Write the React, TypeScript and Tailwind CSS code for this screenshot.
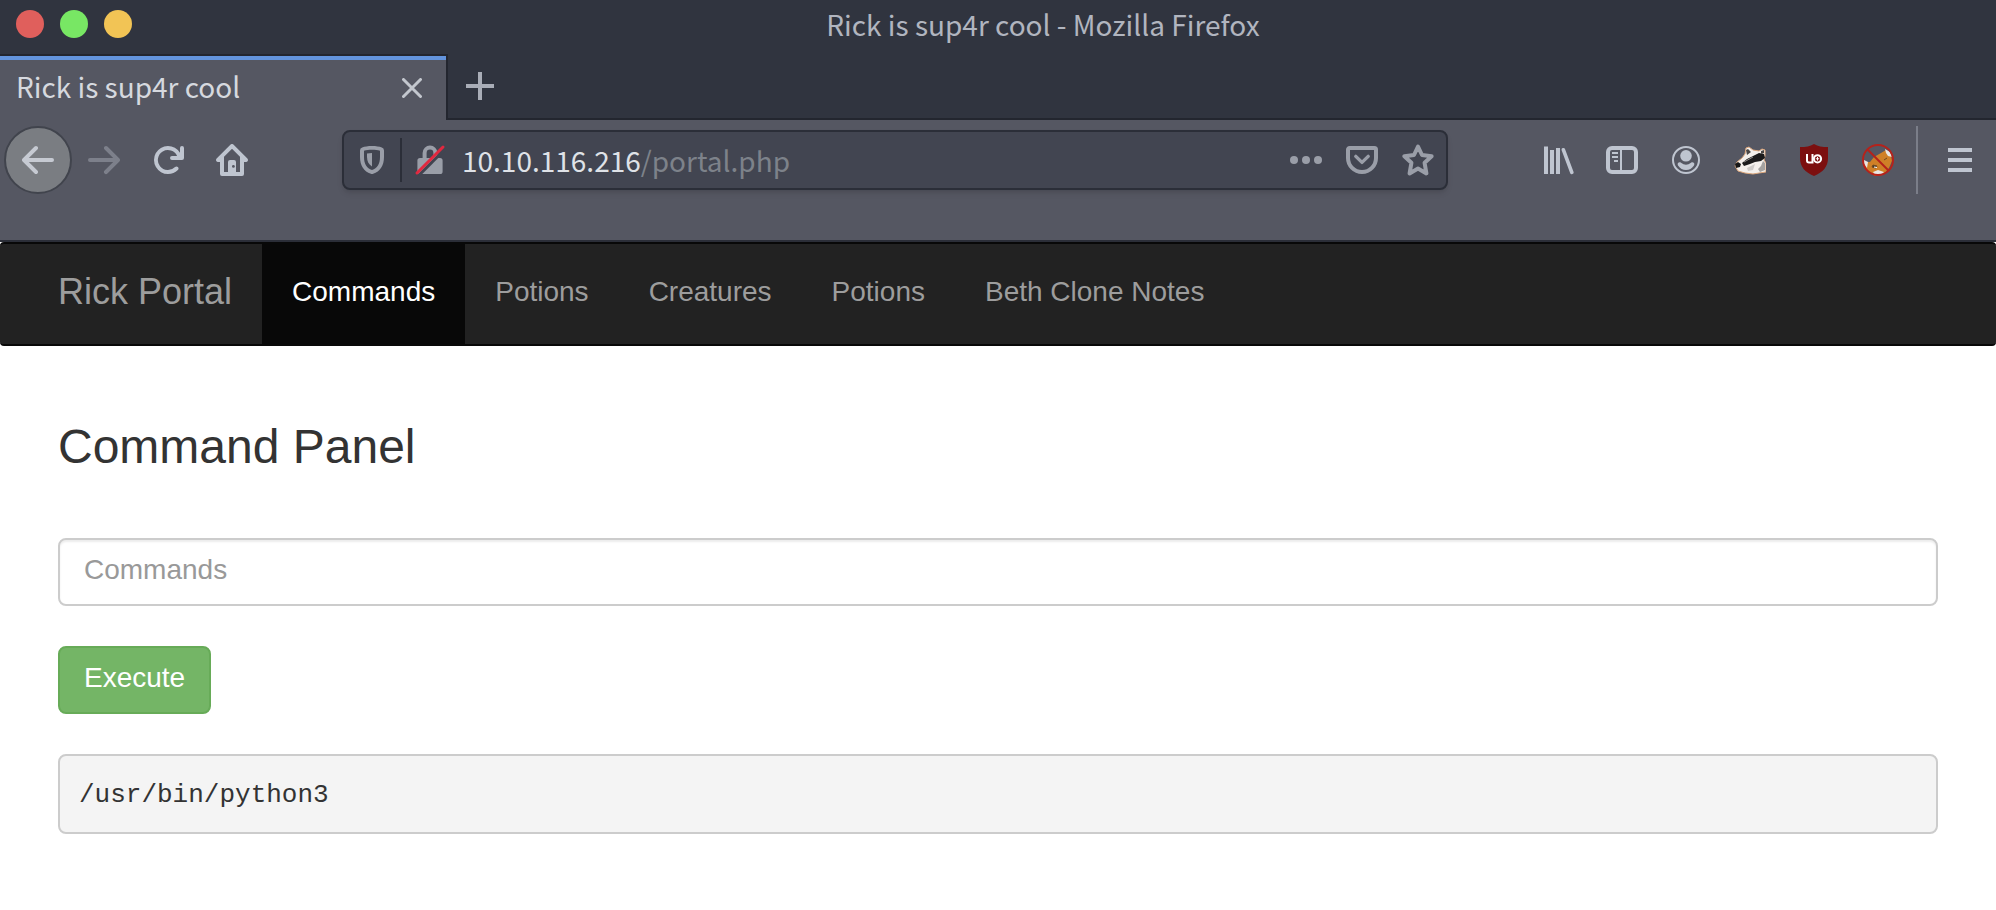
import React from "react";

const photon = "size-8 shrink-0 fill-current";

function BackIcon() {
  return (
    <svg viewBox="0 0 16 16" className={photon} aria-hidden="true">
      <path d="M15 7H3.414l4.293-4.293a1 1 0 0 0-1.414-1.414l-6 6a1 1 0 0 0 0 1.414l6 6a1 1 0 0 0 1.414-1.414L3.414 9H15a1 1 0 0 0 0-2z" />
    </svg>
  );
}

function ForwardIcon() {
  return (
    <svg viewBox="0 0 16 16" className={photon} aria-hidden="true">
      <path d="M15.707 7.293l-6-6a1 1 0 0 0-1.414 1.414L12.586 7H1a1 1 0 0 0 0 2h11.586l-4.293 4.293a1 1 0 1 0 1.414 1.414l6-6a1 1 0 0 0 0-1.414z" />
    </svg>
  );
}

function ReloadIcon() {
  return (
    <svg viewBox="0 0 16 16" className={photon} aria-hidden="true">
      <path d="M15 1a1 1 0 0 0-1 1v2.418A6.995 6.995 0 1 0 8 15a6.954 6.954 0 0 0 4.95-2.05 1 1 0 0 0-1.414-1.414A5.019 5.019 0 1 1 12.549 6H10a1 1 0 0 0 0 2h5a1 1 0 0 0 1-1V2a1 1 0 0 0-1-1z" />
    </svg>
  );
}

function HomeIcon() {
  return (
    <svg viewBox="0 0 16 16" className={photon} aria-hidden="true">
      <path
        fillRule="evenodd"
        d="M8.7.3a1 1 0 0 0-1.4 0l-7 7A1 1 0 0 0 1 9h1v6a1 1 0 0 0 1 1h10a1 1 0 0 0 1-1V9h1a1 1 0 0 0 .7-1.7zM12 14h-2V9a1 1 0 0 0-1-1H7a1 1 0 0 0-1 1v5H4V6.4l4-4 4 4z"
      />
      <circle cx="8.7" cy="11.2" r="0.7" className="fill-[#555762]" />
    </svg>
  );
}

function ShieldIcon() {
  return (
    <svg viewBox="0 0 16 16" className={photon} aria-hidden="true">
      <path
        fillRule="evenodd"
        d="M8 1C6 1 4.300 1.300 3.100 1.700A1.600 1.600 0 0 0 2 3.200v3.300c0 4.300 2 7.400 5.400 8.400a2 2 0 0 0 1.200 0C12 13.900 14 10.800 14 6.500V3.200a1.600 1.600 0 0 0-1.100-1.500C11.700 1.300 10 1 8 1zm0 1.900c1.500 0 2.900.2 4 .5v3.100c0 3.400-1.400 5.700-4 6.500-2.600-.8-4-3.100-4-6.500V3.400c1.100-.3 2.500-.5 4-.5z"
      />
      <path d="M8 4.500c-.9 0-1.700.1-2.500.3v1.700c0 2.200.9 3.800 2.500 4.700z" />
    </svg>
  );
}

function BrokenLockIcon() {
  return (
    <svg viewBox="0 0 16 16" className={photon} aria-hidden="true">
      <path
        fillRule="evenodd"
        d="M4.300 7V4.500a3.700 3.700 0 0 1 7.400 0V7h1.300a1.300 1.300 0 0 1 1.300 1.300v5.400a1.300 1.300 0 0 1-1.300 1.300H3a1.300 1.300 0 0 1-1.300-1.300V8.300A1.300 1.300 0 0 1 3 7zm2 0h3.400V4.500a1.700 1.700 0 0 0-3.400 0z"
      />
      <path d="M2.300 15.800L15.800 2.300" className="stroke-[#424551] stroke-[1.500]" />
      <path d="M1.500 14.500L14.500 1.500" strokeLinecap="round" className="stroke-[#e2283f] stroke-[1.500]" />
    </svg>
  );
}

function DotsIcon() {
  return (
    <svg viewBox="0 0 16 16" className={photon} aria-hidden="true">
      <circle cx="2" cy="8" r="2" />
      <circle cx="8" cy="8" r="2" />
      <circle cx="14" cy="8" r="2" />
    </svg>
  );
}

function PocketIcon() {
  return (
    <svg viewBox="0 0 16 16" className="size-8 shrink-0 fill-none stroke-current stroke-2" aria-hidden="true">
      <path d="M1.800 2h12.400a.8.800 0 0 1 .8.800V7a7 7 0 0 1-14 0V2.800a.8.800 0 0 1 .8-.8z" />
      <path d="M4.900 6.200L8 9.200l3.100-3" strokeLinecap="round" strokeLinejoin="round" className="stroke-[1.700]" />
    </svg>
  );
}

function StarIcon() {
  return (
    <svg viewBox="0 0 16 16" className="size-8 shrink-0 fill-none stroke-current stroke-2" aria-hidden="true">
      <path
        strokeLinejoin="round"
        d="M8 1.300l2 4.200 4.800.6-3.500 3.300.9 5.300L8 12.300l-4.200 2.400.9-5.300L1.200 6.100 6 5.500z"
      />
    </svg>
  );
}

function LibraryIcon() {
  return (
    <svg viewBox="0 0 16 16" className={photon} aria-hidden="true">
      <path d="M1 1.200h2V15H1zM4 3h2v12H4zM7 2h2v13H7z" />
      <path d="M10.700 2.900L14.900 14.200" strokeLinecap="round" className="stroke-current stroke-[1.800]" />
    </svg>
  );
}

function SidebarIcon() {
  return (
    <svg viewBox="0 0 16 16" className={photon} aria-hidden="true">
      <path
        fillRule="evenodd"
        d="M3 1h10a3 3 0 0 1 3 3v8a3 3 0 0 1-3 3H3a3 3 0 0 1-3-3V4a3 3 0 0 1 3-3zm0 2a1 1 0 0 0-1 1v8a1 1 0 0 0 1 1h4V3zm5 0v10h5a1 1 0 0 0 1-1V4a1 1 0 0 0-1-1z"
      />
      <path d="M3 4h3v1H3zM3 6h3v1H3zM4 8h2v1H4z" />
    </svg>
  );
}

function AccountIcon() {
  return (
    <svg viewBox="0 0 16 16" className={photon} aria-hidden="true">
      <circle cx="8" cy="8" r="6.500" className="fill-none stroke-current stroke-1" />
      <circle cx="8" cy="5.900" r="2.900" />
      <path d="M4 9.500c.4-.4 1-.5 1.500-.1a4.200 4.200 0 0 0 5 0c.5-.4 1.100-.3 1.500.1.300.4.200.9-.1 1.400A4.700 4.700 0 0 1 8 13a4.700 4.700 0 0 1-3.900-2.100c-.3-.5-.4-1-.1-1.400z" />
    </svg>
  );
}

function BadgerIcon() {
  return (
    <svg viewBox="0 0 32 32" className="size-8 shrink-0" aria-hidden="true">
      <path
        d="M1 22l2-4 5-4 3-4 1-6 3-1 4 3 6 1 3-2 3 1v6l-1 4 2 3v9l-7 1-6 1-8-1-7-2z"
        strokeLinejoin="round"
        className="fill-[#f4f0ec] stroke-[#dca77c] stroke-1"
      />
      <path d="M1 20l3-2 3 2-1 3-4 1z" className="fill-[#171717]" />
      <path d="M8 19l5-4 6-3 6-3 5 1 1 4-4 3-6 1-5 2-6 2z" className="fill-[#1b1b1b]" />
      <path d="M12 6l2-1 3 3-4 3zM27 7l3-1v3l-3 1z" className="fill-[#4a4745]" />
      <path d="M29 17l2 2v7l-5 2-2-3 3-3z" className="fill-[#a5a3a1]" />
      <path d="M13 24l8-4-2 6-5 1z" className="fill-[#cfccc9]" />
      <path d="M10 18l9-5" className="stroke-[#8d8a88] stroke-1" />
    </svg>
  );
}

function UblockIcon() {
  return (
    <svg viewBox="0 0 32 32" className="size-8 shrink-0" aria-hidden="true">
      <path d="M16 0c4 2.500 8 3 14 3v11c0 9-5 14-14 18C7 28 2 23 2 14V3c6 0 10-.5 14-3z" className="fill-[#7c0f0f]" />
      <path
        d="M9 11v5.500a2 2 0 0 0 2 2h3.500M14.500 11v7.500"
        strokeLinecap="square"
        className="fill-none stroke-white stroke-2"
      />
      <circle cx="19.500" cy="14.800" r="3.600" className="fill-none stroke-white stroke-2" />
      <path d="M19.500 13v3.600M17.700 14.800h3.600" className="stroke-white stroke-1" />
    </svg>
  );
}

function FoxyProxyIcon() {
  return (
    <svg viewBox="0 0 32 32" className="size-8 shrink-0" aria-hidden="true">
      <path d="M3 18l5 0 4-5 7-4 5-3 5 4 1 7-3 7-6 7-8 1-6-4-4-4z" className="fill-[#cf8027]" />
      <path d="M2 16l4 2-1 6-3-4zM23 5l5 3 2 5-4-1-2-3zM11 28l5-2 6 2-3 3h-6z" className="fill-[#e9e6e3]" />
      <path d="M11 21l4 1-1 2-4-1zM22 16l3-2" className="fill-[#4d3822] stroke-[#6d4a22]" />
      <path d="M12 23l3 .5" className="stroke-white stroke-1" />
      <circle cx="16" cy="16" r="15" className="fill-none stroke-[#b5221b] stroke-2" />
      <path d="M5.500 5.500l21 21" className="stroke-[#b5221b] stroke-2" />
    </svg>
  );
}

function MenuIcon() {
  return (
    <svg viewBox="0 0 16 16" className={photon} aria-hidden="true">
      <path d="M2 2h12v2H2zM2 7h12v2H2zM2 12h12v2H2z" />
    </svg>
  );
}

type IconButtonProps = { label: string; children: React.ReactNode; className?: string };

function IconButton({ label, children, className = "" }: IconButtonProps) {
  return (
    <button type="button" aria-label={label} className={`flex shrink-0 items-center justify-center ${className}`}>
      {children}
    </button>
  );
}

function TitleBar() {
  return (
    <header className="relative flex h-[54px] items-center justify-center bg-[#30343f]">
      <div className="absolute top-2.5 left-4 flex gap-4">
        <button type="button" aria-label="Close window" className="size-7 rounded-full bg-[#e05f5c]" />
        <button type="button" aria-label="Maximize window" className="size-7 rounded-full bg-[#78e764]" />
        <button type="button" aria-label="Minimize window" className="size-7 rounded-full bg-[#f2c455]" />
      </div>
      <span className="pb-1.5 pl-[90px] text-[28px] leading-8 text-[#b1b5bf]">Rick is sup4r cool - Mozilla Firefox</span>
    </header>
  );
}

function TabStrip() {
  return (
    <div className="flex h-[66px] bg-[#30343f]">
      <div className="flex w-[448px] border-t-2 border-r-2 border-[#23262f] bg-[#555762]">
        <div className="flex w-full items-center justify-between border-t-4 border-[#6394dd] pr-6 pb-1 pl-4">
          <span className="pb-1 text-[28px] leading-8 text-[#d6d9df]">Rick is sup4r cool</span>
          <IconButton label="Close tab" className="text-[#c3c7ce]">
            <svg viewBox="0 0 20 20" className="size-5 fill-none stroke-current stroke-[3]" aria-hidden="true">
              <path d="M1.500 1.500l17 17M18.500 1.500l-17 17" strokeLinecap="round" />
            </svg>
          </IconButton>
        </div>
      </div>
      <div className="flex flex-1 items-center border-b-2 border-[#23262f] pl-[18px]">
        <IconButton label="New tab" className="text-[#a9adb7]">
          <svg viewBox="0 0 28 28" className="size-7 fill-none stroke-current stroke-4" aria-hidden="true">
            <path d="M14 0v28M0 14h28" />
          </svg>
        </IconButton>
      </div>
    </div>
  );
}

function UrlBar() {
  return (
    <div className="flex h-[60px] flex-1 items-center rounded-lg border-2 border-[#2b2e38] bg-[#424551] px-3 text-[#9a9ea8] shadow-md">
      <IconButton label="Tracking protection"><ShieldIcon /></IconButton>
      <span className="mx-3 h-11 w-0.5 bg-[#2b2e38]" />
      <IconButton label="Connection is not secure"><BrokenLockIcon /></IconButton>
      <div role="textbox" aria-label="Address" className="ml-4 flex-1 text-[28px] leading-8 whitespace-nowrap">
        <span className="text-[#dfe2e7]">10.10.116.216</span>
        <span className="text-[#7d828a]">/portal.php</span>
      </div>
      <div className="flex gap-6">
        <IconButton label="Page actions"><DotsIcon /></IconButton>
        <IconButton label="Save to Pocket"><PocketIcon /></IconButton>
        <IconButton label="Bookmark this page"><StarIcon /></IconButton>
      </div>
    </div>
  );
}

function Toolbar() {
  return (
    <div className="flex h-[122px] items-start border-b-2 border-[#2b2e38] bg-[#555762] pt-[6px] text-[#bfc5d0]">
      <div className="flex items-center pl-1">
        <IconButton label="Back" className="size-[68px] rounded-full border-2 border-[#41444d] bg-[#7a7d82] text-[#c6cad2]">
          <BackIcon />
        </IconButton>
        <IconButton label="Forward" className="ml-4 text-[#7d808b]"><ForwardIcon /></IconButton>
        <IconButton label="Reload" className="ml-8"><ReloadIcon /></IconButton>
        <IconButton label="Home" className="ml-8"><HomeIcon /></IconButton>
      </div>
      <div className="flex flex-1 px-[94px] pt-1">
        <UrlBar />
      </div>
      <div className="flex h-[68px] items-center gap-8">
        <IconButton label="Library"><LibraryIcon /></IconButton>
        <IconButton label="Sidebars"><SidebarIcon /></IconButton>
        <IconButton label="Account"><AccountIcon /></IconButton>
        <IconButton label="Privacy Badger"><BadgerIcon /></IconButton>
        <IconButton label="uBlock Origin"><UblockIcon /></IconButton>
        <IconButton label="FoxyProxy"><FoxyProxyIcon /></IconButton>
      </div>
      <div className="ml-[22px] flex h-[68px] items-center border-l-2 border-[#7b7e89] pr-5 pl-[26px]">
        <IconButton label="Open menu"><MenuIcon /></IconButton>
      </div>
    </div>
  );
}

const links = ["Commands", "Potions", "Creatures", "Potions", "Beth Clone Notes"];

function Navbar() {
  return (
    <nav className="flex rounded-[4px] border-y-2 border-[#080808] bg-[#222222] pl-7 text-[#9d9d9d]">
      <a href="#" className="px-[30px] pt-7 pb-8 text-[36px] leading-10">Rick Portal</a>
      <ul className="flex text-[28px] leading-10">
        {links.map((name, i) => (
          <li key={i} className="flex">
            <a href="#" className={i === 0 ? "bg-[#080808] px-[30px] pt-7 pb-8 text-white" : "px-[30px] pt-7 pb-8"}>
              {name}
            </a>
          </li>
        ))}
      </ul>
    </nav>
  );
}

function CommandPanel() {
  return (
    <main className="px-[58px] pt-[74px] text-[#333333]">
      <h3 className="text-[48px] leading-[54px]">Command Panel</h3>
      <form className="mt-16 flex flex-col items-start gap-10" onSubmit={(e) => e.preventDefault()}>
        <input
          type="text"
          aria-label="Commands"
          placeholder="Commands"
          className="h-[68px] w-full rounded-lg border-2 border-[#cccccc] bg-white px-6 pb-1 text-[28px] shadow-[inset_0_2px_2px_rgba(0,0,0,0.075)] placeholder:text-[#999999]"
        />
        <button
          type="submit"
          className="h-[68px] rounded-lg border-2 border-[#67ab58] bg-[#74b566] px-6 pb-1 text-[28px] leading-10 text-white"
        >
          Execute
        </button>
      </form>
      <pre className="mt-10 h-20 rounded-lg border-2 border-[#cccccc] bg-[#f4f4f4] px-[19px] py-5 font-['Liberation_Mono',monospace] text-[26px] leading-[38px]">
        /usr/bin/python3
      </pre>
    </main>
  );
}

export default function App() {
  return (
    <div className="min-h-screen bg-white">
      <div className="font-['Noto_Sans_CJK_SC','Noto_Sans',sans-serif]">
        <TitleBar />
        <TabStrip />
        <Toolbar />
      </div>
      <div className="font-['Liberation_Sans',Arial,sans-serif]">
        <Navbar />
        <CommandPanel />
      </div>
    </div>
  );
}
